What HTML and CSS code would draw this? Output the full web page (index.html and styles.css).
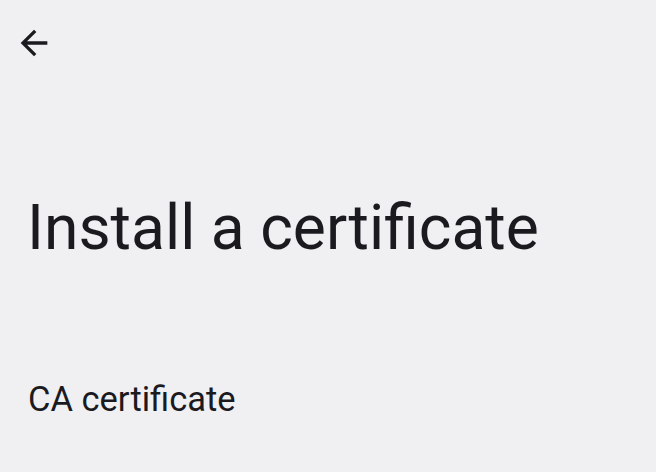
FILE: index.html
```html
<!DOCTYPE html>
<html>
<head>
<meta charset="utf-8">
<link rel="stylesheet" href="styles.css">
</head>
<body>
<div class="page">
  <div class="toolbar">
    <button class="back" aria-label="Back">
      <svg viewBox="0 0 24 24" width="40" height="40"><path d="M20 11H7.83l5.59-5.59L12 4l-8 8 8 8 1.41-1.41L7.83 13H20v-2z" fill="#1b1b1f"/></svg>
    </button>
  </div>
  <h1 class="title">Install a certificate</h1>
  <div class="item">CA certificate</div>
</div>
</body>
</html>
```
FILE: styles.css
```css
html, body {
  margin: 0;
  padding: 0;
  background: #f0f0f3;
}
body {
  font-family: Roboto, "Noto Sans", sans-serif;
  color: #1b1b1f;
  width: 656px;
  height: 472px;
  overflow: hidden;
}
.page {
  display: flex;
  flex-direction: column;
}
.toolbar {
  height: 86px;
  display: flex;
  align-items: flex-start;
  padding: 23px 0 0 14px;
  box-sizing: border-box;
}
.back {
  border: 0;
  background: none;
  padding: 0;
  width: 40px;
  height: 40px;
  display: flex;
}
.title {
  margin: 0;
  padding: 0 0 0 27px;
  font-size: 62.4px;
  font-weight: 400;
  line-height: 80px;
  margin-top: 102px;
}
.item {
  padding-left: 28px;
  font-size: 34.5px;
  line-height: 44px;
  margin-top: 109px;
}
```
